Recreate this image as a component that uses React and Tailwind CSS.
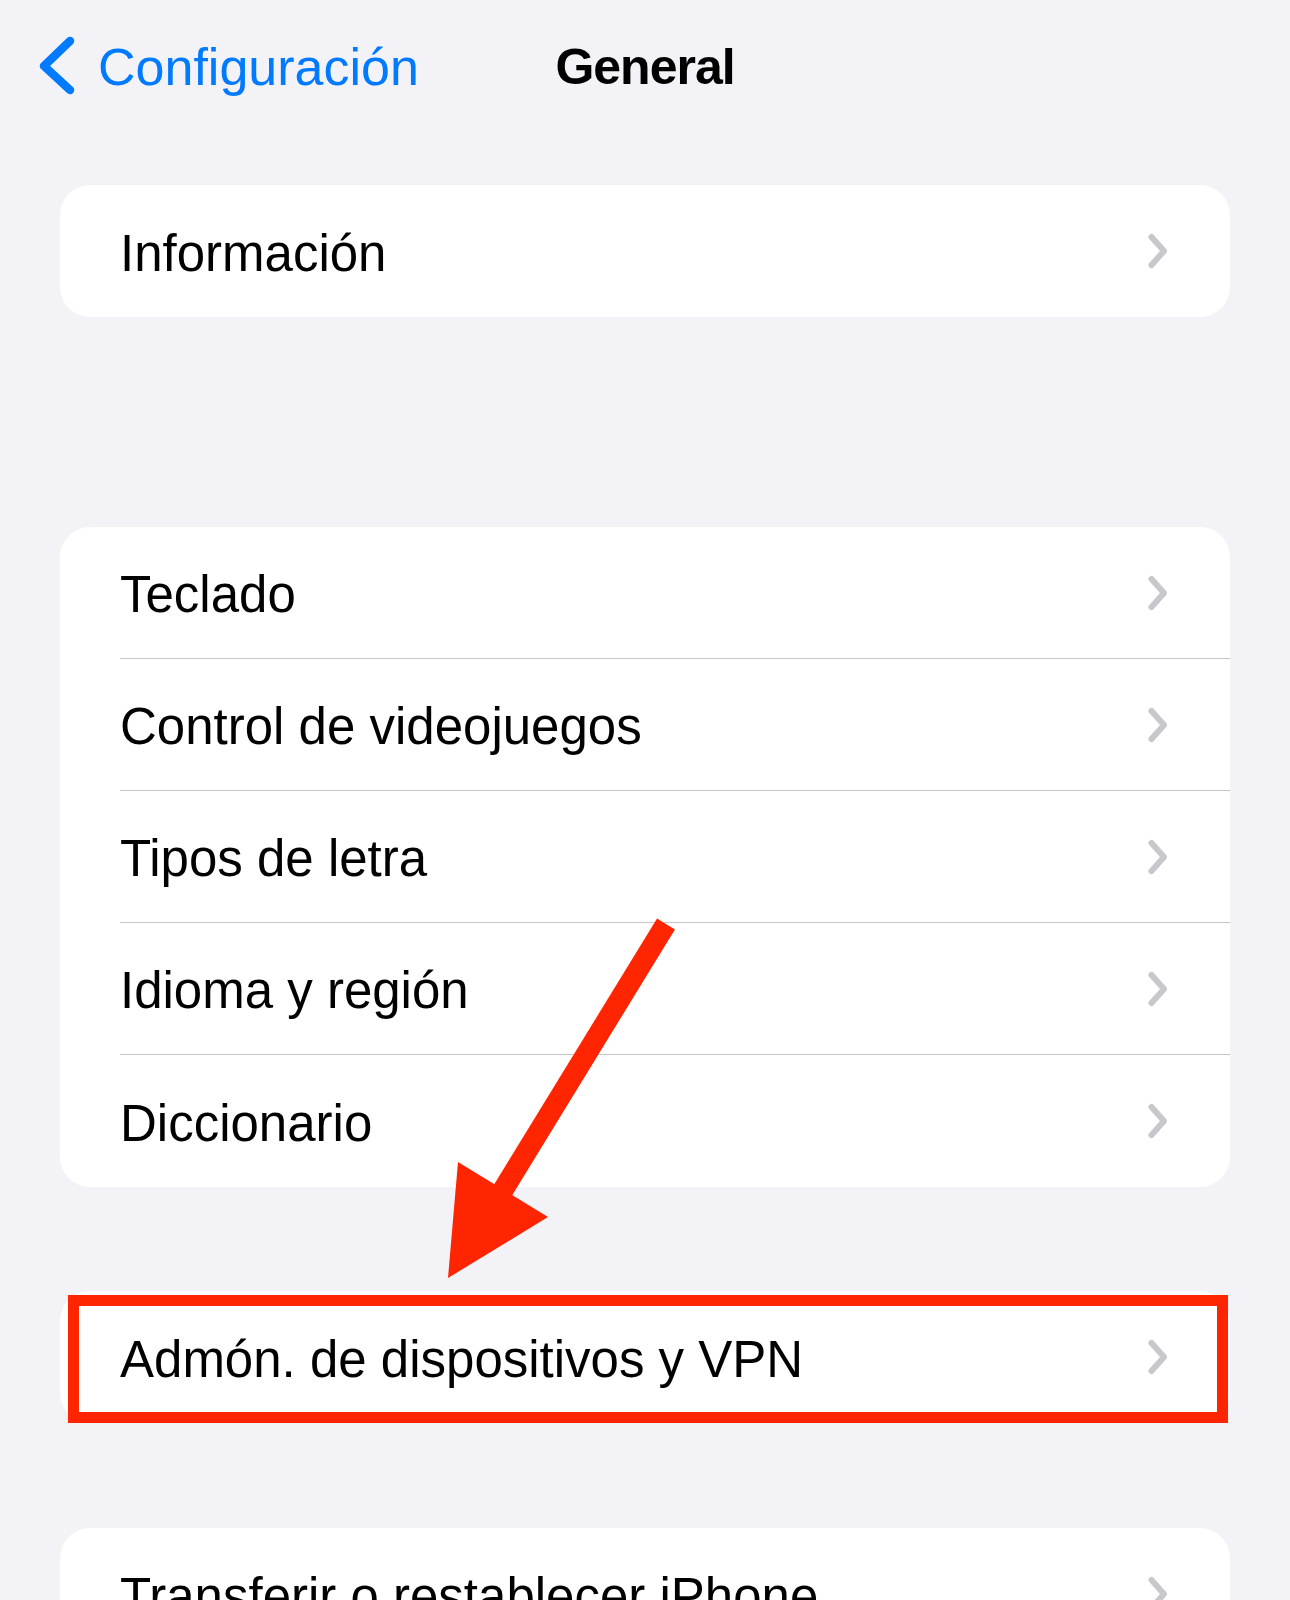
import React from "react";

const font = { fontFamily: '"Liberation Sans", Arial, sans-serif' };

function Chevron() {
  return (
    <svg width="24" height="40" viewBox="0 0 24 40" className="shrink-0">
      <path
        d="M5.5 6 L18 20 L5.5 34"
        fill="none"
        stroke="#c7c7cc"
        strokeWidth="6"
        strokeLinecap="round"
        strokeLinejoin="round"
      />
    </svg>
  );
}

function Row({ label, last }) {
  return (
    <div className="flex h-[132px] pl-[60px]">
      <div
        className={`flex flex-1 items-center justify-between pr-[60px] ${
          last ? "" : "border-b border-[#c6c6c8]"
        }`}
      >
        <span className="mt-[4px] text-[51px] leading-none text-black">{label}</span>
        <Chevron />
      </div>
    </div>
  );
}

function Group({ items, className = "", children }) {
  return (
    <div className={`relative mx-[60px] rounded-[30px] bg-white ${className}`}>
      {items.map((label, i) => (
        <Row key={label} label={label} last={i === items.length - 1} />
      ))}
      {children}
    </div>
  );
}

export default function App() {
  return (
    <div className="relative h-[1600px] w-[1290px] overflow-hidden bg-[#f2f2f7]" style={font}>
      {/* Nav bar */}
      <div className="grid h-[132px] grid-cols-[1fr_auto_1fr] items-center">
        <div className="flex items-center gap-[22px] pl-[36px]">
          <svg width="40" height="64" viewBox="0 0 40 64" className="shrink-0">
            <path
              d="M34 7 L8 32 L34 56"
              fill="none"
              stroke="#007aff"
              strokeWidth="8.5"
              strokeLinecap="round"
              strokeLinejoin="round"
            />
          </svg>
          <span className="mt-[2px] text-[52px] leading-none text-[#007aff]">Configuración</span>
        </div>
        <span className="mt-[2px] text-[50px] font-bold leading-none tracking-[-1px] text-black">
          General
        </span>
        <div />
      </div>

      <Group items={["Información"]} className="mt-[53px]" />

      <Group
        items={[
          "Teclado",
          "Control de videojuegos",
          "Tipos de letra",
          "Idioma y región",
          "Diccionario",
        ]}
        className="mt-[210px] overflow-hidden"
      />

      <Group items={["Admón. de dispositivos y VPN"]} className="mt-[104px]">
        <div className="pointer-events-none absolute bottom-0 left-[8px] right-[2px] top-[4px] border-[11px] border-[#ff2500]" />
      </Group>

      <Group items={["Transferir o restablecer iPhone"]} className="mt-[105px]" />

      {/* Annotation arrow */}
      <svg
        className="pointer-events-none absolute left-0 top-0"
        width="1290"
        height="1600"
        viewBox="0 0 1290 1600"
      >
        <line x1="666" y1="924" x2="500" y2="1195" stroke="#ff2500" strokeWidth="21" />
        <polygon points="458,1162 548,1217 448,1278" fill="#ff2500" />
      </svg>
    </div>
  );
}
